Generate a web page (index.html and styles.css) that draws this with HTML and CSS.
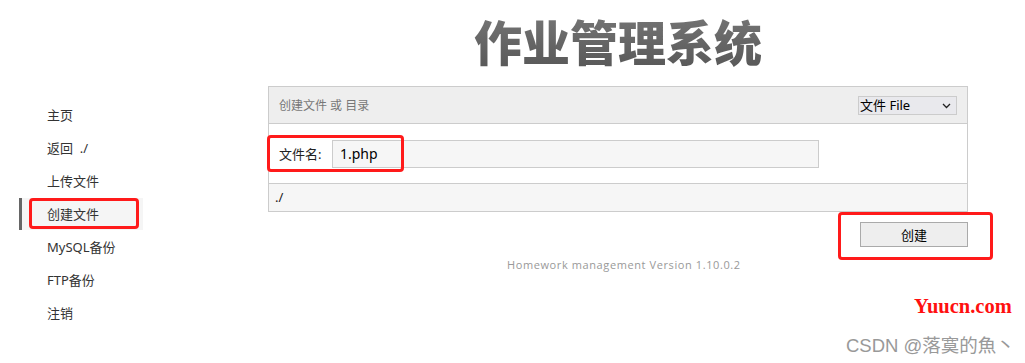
FILE: index.html
```html
<!DOCTYPE html>
<html lang="zh-CN">
<head>
  <meta charset="UTF-8" />
  <title>作业管理系统</title>
  <link rel="stylesheet" href="styles.css">
</head>
<body>
  <div class="page">
    <ul class="sidebar">
      <li class="nav-item">主页</li>
      <li class="nav-item">返回 &nbsp;./</li>
      <li class="nav-item">上传文件</li>
      <li class="nav-item active">创建文件<span class="mark mark-nav"></span></li>
      <li class="nav-item">MySQL备份</li>
      <li class="nav-item">FTP备份</li>
      <li class="nav-item">注销</li>
    </ul>

    <div class="main">
      <h1 class="title">作业管理系统</h1>

      <div class="panel">
        <div class="panel-head">
          <span>创建文件 或 目录</span>
          <div class="select-wrap">
            <select class="type-select">
              <option>文件 File</option>
              <option>目录 Dir</option>
            </select>
            <svg class="chevron" width="9" height="6" viewBox="0 0 9 6">
              <path d="M1 1 L4.5 4.5 L8 1" fill="none" stroke="#222" stroke-width="1.3"/>
            </svg>
          </div>
        </div>
        <div class="panel-body">
          <label class="field-label" for="filename">文件名:</label>
          <input type="text" id="filename" class="field-input" value="1.php" />
          <span class="mark mark-field"></span>
        </div>
        <div class="panel-foot">./</div>
      </div>

      <div class="actions">
        <button type="button" class="create-btn">创建</button>
        <span class="mark mark-btn"></span>
      </div>

      <p class="version">Homework management Version 1.10.0.2</p>
    </div>
  </div>

  <div class="wm-site">Yuucn.com</div>
  <div class="wm-csdn">CSDN @落寞的魚丶</div>
</body>
</html>
```

FILE: styles.css
```css
body {
  margin: 0;
  background: #fff;
  color: #333;
  font-family: "Noto Sans", "Noto Sans CJK SC", sans-serif;
  font-size: 13px;
  height: 363px;
  overflow: hidden;
  position: relative;
}
.page {
  display: flex;
}
.sidebar {
  list-style: none;
  margin: 0;
  padding: 99px 0 0 0;
  width: 268px;
  flex: none;
}
.nav-item {
  position: relative;
  margin-left: 19px;
  width: 124px;
  height: 32px;
  line-height: 32px;
  margin-bottom: 1px;
  padding-left: 25px;
  border-left: 3px solid transparent;
  box-sizing: border-box;
  color: #333;
}
.nav-item.active {
  border-left-color: #666;
  background: #f5f5f5;
}
.mark {
  position: absolute;
  border: 3px solid #ff1a1a;
  border-radius: 4px;
  box-sizing: border-box;
}
.mark-nav {
  left: 7px;
  top: 0;
  width: 110px;
  height: 31px;
}
.main {
  width: 700px;
  display: flex;
  flex-direction: column;
}
.title {
  margin: 0;
  height: 86px;
  padding-top: 10px;
  box-sizing: border-box;
  line-height: 60px;
  text-align: center;
  font-family: "Noto Sans CJK SC", sans-serif;
  font-size: 48px;
  font-weight: 900;
  background: linear-gradient(#7c7c7c, #4f4f4f);
  -webkit-background-clip: text;
  background-clip: text;
  color: transparent;
}
.panel {
  border: 1px solid #ccc;
}
.panel-head {
  height: 36px;
  background: #eee;
  border-bottom: 1px solid #ccc;
  display: flex;
  align-items: center;
  justify-content: space-between;
  padding: 0 10px;
  color: #777;
  font-size: 12px;
}
.select-wrap {
  position: relative;
  display: flex;
}
.type-select {
  -webkit-appearance: none;
  appearance: none;
  width: 99px;
  height: 19px;
  padding: 0 0 0 1px;
  border: 1px solid #ccc;
  border-radius: 0;
  background: #e9e9ed;
  font-family: "Noto Sans", "Noto Sans CJK SC", sans-serif;
  font-size: 13px;
  line-height: 17px;
  color: #000;
}
.chevron {
  position: absolute;
  right: 6px;
  top: 7px;
  pointer-events: none;
}
.panel-body {
  position: relative;
  height: 60px;
  border-bottom: 1px solid #ccc;
  display: flex;
  align-items: center;
  padding: 0 10px;
  box-sizing: border-box;
}
.field-label {
  width: 53px;
  color: #222;
}
.field-input {
  width: 487px;
  height: 28px;
  box-sizing: border-box;
  border: 1px solid #ccc;
  background: #f6f6f6;
  padding: 0 7px;
  font-family: "Noto Sans", sans-serif;
  font-size: 14px;
  color: #000;
}
.mark-field {
  left: -2px;
  top: 11px;
  width: 137px;
  height: 37px;
}
.panel-foot {
  height: 27px;
  line-height: 27px;
  background: #f6f6f6;
  padding-left: 6px;
  color: #222;
}
.actions {
  position: relative;
  display: flex;
  justify-content: flex-end;
  padding-top: 10px;
}
.create-btn {
  width: 108px;
  height: 25px;
  background: #eee;
  border: 1px solid #aaa;
  font-family: "Noto Sans CJK SC", sans-serif;
  font-size: 13px;
  color: #000;
  padding: 0;
}
.mark-btn {
  left: 570px;
  top: 0;
  width: 155px;
  height: 48px;
}
.version {
  margin: 10px 0 0 0;
  padding-left: 239px;
  font-family: "Open Sans", sans-serif;
  font-size: 11px;
  letter-spacing: 0.6px;
  color: #999;
}
.wm-site {
  position: absolute;
  left: 914px;
  top: 295px;
  font-family: "Liberation Serif", serif;
  font-weight: bold;
  font-size: 20.5px;
  color: #ff1010;
}
.wm-csdn {
  position: absolute;
  left: 846px;
  top: 331px;
  font-family: "Liberation Sans", "Noto Sans CJK SC", sans-serif;
  font-size: 18.5px;
  color: #999;
}
```
